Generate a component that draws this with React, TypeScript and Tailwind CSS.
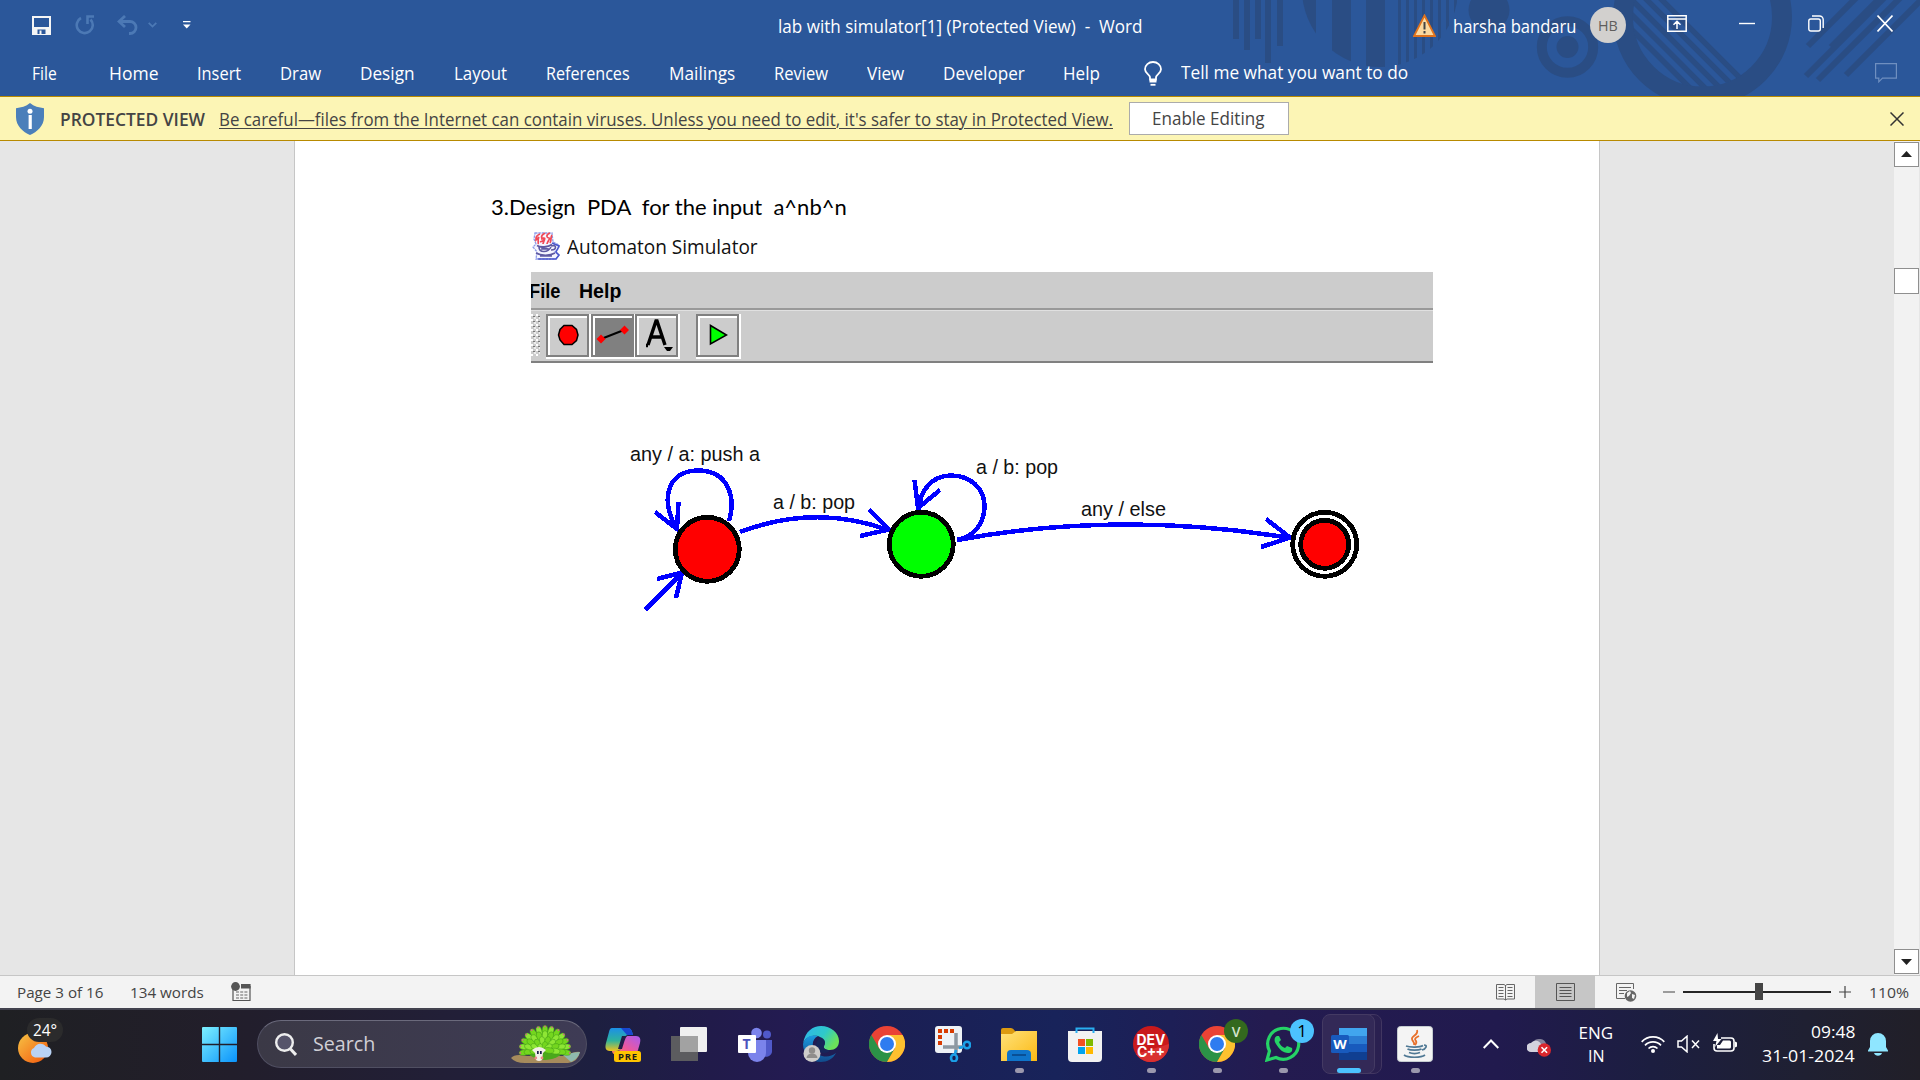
import React, { useLayoutEffect, useRef, useState } from "react";

/* Single-line text condensed or widened to fill the width of its box. */
function Fit({ className = "", inner = "", children }: { className?: string; inner?: string; children: React.ReactNode }) {
  const box = useRef<HTMLSpanElement>(null);
  const txt = useRef<HTMLSpanElement>(null);
  const [scale, setScale] = useState(1);
  useLayoutEffect(() => {
    if (box.current && txt.current && txt.current.offsetWidth) {
      setScale(box.current.offsetWidth / txt.current.offsetWidth);
    }
  }, []);
  return (
    <span ref={box} className={"block shrink-0 whitespace-pre " + className}>
      <span ref={txt} className={"inline-block origin-left " + inner} style={{ transform: `scaleX(${scale})` }}>
        {children}
      </span>
    </span>
  );
}

function Decor() {
  const bars = [[1233, 39], [1244, 50], [1255, 39], [1265, 63], [1277, 46]];
  const thin = [1398, 1406, 1414, 1422, 1430, 1438, 1446, 1454];
  const diag = [1662, 1647, 1632, 1617, 1602];
  return (
    <svg className="absolute top-0 right-0" width="700" height="96" viewBox="1220 0 700 96" fill="#2a4d84">
      <defs>
        <clipPath id="disc"><circle cx="1380" cy="-11" r="78" /></clipPath>
        <clipPath id="ring"><circle cx="1702.5" cy="17" r="70" /></clipPath>
      </defs>
      {bars.map(([x, h]) => <rect key={x} x={x} y="0" width="6" height={h} />)}
      <g clipPath="url(#disc)">
        <rect x="1300" y="0" width="16" height="96" />
        <rect x="1332" y="0" width="19" height="96" />
        <rect x="1366" y="0" width="19" height="96" />
        {thin.map((x) => <rect key={x} x={x} y="0" width="3" height="96" />)}
      </g>
      <circle cx="1489" cy="10" r="20.5" />
      <circle cx="1567.5" cy="47" r="25.7" fill="none" stroke="#2a4d84" strokeWidth="10" />
      <circle cx="1567.5" cy="47" r="11" />
      <circle cx="1702.5" cy="17" r="79.5" fill="none" stroke="#2a4d84" strokeWidth="20" />
      <g clipPath="url(#ring)" stroke="#2a4d84" strokeWidth="5.5">
        {diag.map((c) => <path key={c} d={`M${c - 20} -20L${c + 110} 110`} />)}
      </g>
      <g stroke="#2a4d84" strokeWidth="6">
        <path d="M1808 46L1862 -8M1831 47L1886 -8M1806 76L1890 -8M1818 80L1906 -8M1846 75L1930 -9" />
      </g>
    </svg>
  );
}

function TitleBar() {
  return (
    <div className="relative flex h-[50px] items-center pl-8 pr-[27px] text-[17.5px] leading-6 text-white">
      <svg width="19" height="19" viewBox="0 0 19 19" fill="none">
        <path d="M1 1h17v17H1z" stroke="#f5f5f5" strokeWidth="2" />
        <path d="M1 11h17v7H1z" fill="#f5f5f5" />
        <path d="M5.500 13.500h8v4.500h-8z" fill="#2b579a" /><path d="M7.500 14.500h2v4h-2z" fill="#f5f5f5" />
      </svg>
      <svg className="ml-6" width="20" height="20" viewBox="0 0 20 20" fill="none" stroke="#4c79b5" strokeWidth="2.6">
        <path d="M6 3A8 8 0 1 0 15.500 4.500" /><path d="M19 1.500h-6.500V9" />
      </svg>
      <svg className="ml-[22px]" width="21" height="20" viewBox="0 0 21 20" fill="none" stroke="#4c79b5" strokeWidth="2.800">
        <path d="M8 1L2 6.500L8 12M2 6.500h11a6 6 0 0 1 0 12h-1" />
      </svg>
      <svg className="ml-[10px]" width="9" height="6" viewBox="0 0 9 6" fill="none" stroke="#4c79b5" strokeWidth="1.800"><path d="M.7 .8L4.500 4.600L8.300 .8" /></svg>
      <svg className="ml-[26px]" width="8" height="8" viewBox="0 0 8 8" fill="#fff"><path d="M0 0h7.500v1.300H0zM0 3.500h7.500L3.750 7.500z" /></svg>
      <Fit className="ml-[587px] mt-[1px] w-[365px]">lab with simulator[1] (Protected View)  -  Word</Fit>
      <div className="ml-auto flex items-center">
        <svg width="23" height="23" viewBox="0 0 23 23"><path d="M11.500 1.500L22 22H1z" fill="#fbd9a0" stroke="#e0731d" strokeWidth="1.800" /><path d="M10.500 8h2v7.500h-2zM10.500 17h2v2.500h-2z" fill="#444" /></svg>
        <Fit className="ml-[17px] mt-[1px] w-[123px]">harsha bandaru</Fit>
        <div className="ml-[14px] flex size-9 items-center justify-center rounded-full bg-[#d2d0ce] text-[15px] text-[#605e5c]"><Fit className="w-5">HB</Fit></div>
        <svg className="ml-[41px] -mt-1" width="20" height="17" viewBox="0 0 20 17" fill="none" stroke="#fff" strokeWidth="1.500"><path d="M.8 .8h18.400v15.400H.8zM.8 4h18.400M10 14V6.500M6.500 9.800L10 6.300L13.500 9.800" /></svg>
        <svg className="ml-[52px] -mt-1" width="16" height="17" viewBox="0 0 16 17" stroke="#fff" strokeWidth="1.400"><path d="M0 8.500h16" /></svg>
        <svg className="ml-[53px] -mt-1" width="16" height="17" viewBox="0 0 16 17" fill="none" stroke="#fff" strokeWidth="1.400"><rect x=".8" y="4" width="11.500" height="12" rx="2" /><path d="M4 1h7.500a3.700 3.700 0 0 1 3.700 3.700V13" /></svg>
        <svg className="ml-[53px] -mt-1" width="16" height="17" viewBox="0 0 16 17" stroke="#fff" strokeWidth="1.600"><path d="M.5 .5l15 16M15.500 .5l-15 16" /></svg>
      </div>
    </div>
  );
}

function Tabs() {
  return (
    <div className="relative flex h-[46px] items-center pl-8 text-[17.5px] leading-6 text-white">
      <Fit className="w-[25px]">File</Fit>
      <Fit className="ml-[52px] w-[49px]">Home</Fit>
      <Fit className="ml-[39px] w-[44px]">Insert</Fit>
      <Fit className="ml-[39px] w-[41px]">Draw</Fit>
      <Fit className="ml-[39px] w-[55px]">Design</Fit>
      <Fit className="ml-[39px] w-[53px]">Layout</Fit>
      <Fit className="ml-[39px] w-[84px]">References</Fit>
      <Fit className="ml-[39px] w-[66px]">Mailings</Fit>
      <Fit className="ml-[39px] w-[54px]">Review</Fit>
      <Fit className="ml-[39px] w-[37px]">View</Fit>
      <Fit className="ml-[39px] w-[82px]">Developer</Fit>
      <Fit className="ml-[38px] w-[37px]">Help</Fit>
      <svg className="ml-[44px]" width="18" height="25" viewBox="0 0 18 25" fill="none" stroke="#fff" strokeWidth="1.800">
        <path d="M6 18.500V16.500C6 13.500 1 12.500 1 8.300a8 7.300 0 0 1 16 0C17 12.500 12 13.500 12 16.500v2zM5.500 20.500h7" /><path d="M6.500 23.800h5" />
      </svg>
      <Fit className="ml-[19px] -mt-[2px] w-[227px]">Tell me what you want to do</Fit>
      <svg className="ml-auto mr-[23px]" width="22" height="20" viewBox="0 0 22 20" fill="none" stroke="#6f8fc0" strokeWidth="1.200"><path d="M.6 .6h20.800v14.500H7.500L3.800 18.800V15.100H.6z" /></svg>
    </div>
  );
}

function ProtectedBar() {
  return (
    <div className="flex h-[45px] items-center border-y border-[#b88a00] bg-[#fcf5b5] pl-4 pr-4 text-[17.5px] leading-6 text-[#444]">
      <svg width="28" height="32" viewBox="0 0 28 32"><path d="M14 0C18 3.500 23 4.500 28 5.200V14C28 23 21 29 14 32C7 29 0 23 0 14V5.200C5 4.500 10 3.500 14 0z" fill="#4b7fba" /><circle cx="14" cy="8.300" r="2.500" fill="#fff" /><path d="M12.600 12h3.200v14h-3.200z" fill="#fff" /></svg>
      <Fit className="ml-4 w-[145px] font-semibold">PROTECTED VIEW</Fit>
      <Fit className="ml-[14px] w-[894px]" inner="underline decoration-1 underline-offset-2">Be careful—files from the Internet can contain viruses. Unless you need to edit, it's safer to stay in Protected View.</Fit>
      <div className="ml-4 flex h-[33px] w-40 items-center justify-center border border-[#ababab] bg-white"><Fit className="-ml-[2px] -mt-px w-[112px]">Enable Editing</Fit></div>
      <svg className="ml-auto" width="14" height="14" viewBox="0 0 14 14" stroke="#333" strokeWidth="1.500"><path d="M.5 .5l13 13M13.500 .5l-13 13" /></svg>
    </div>
  );
}

const bevel = "flex size-[43px] items-center justify-center border-2 border-[#808080] shadow-[1px_1px_0_1px_#fff,inset_1px_1px_0_1px_#fff]";

function SimulatorWindow() {
  return (
    <div className="ml-[236px] w-[902px]">
      <div className="flex h-[52px] items-center pl-[1px]">
        <svg width="28" height="28" viewBox="0 0 28 28" fill="none" strokeWidth="1.300">
          <path d="M3 1h17l1 9 6 3v3l-4 4 4 3-3 4H4l1-7-4-5 3-3-2-5z" fill="#f6f6ff" stroke="#8f9ce8" strokeDasharray="2.500 .8" />
          <path d="M8 2c-5 2-4 5-4 6l3-3c-2 3 0 5-1 7M13 1c-5 3-4 6-1 5 2 0-1 4-1 6M18 1c-5 2-3 5-1 5s-2 4-2 6M20 3c-2 3 0 5-2 8M9 7h4M8 10l5-2" stroke="#f04a58" strokeWidth="1.700" />
          <path d="M5 13.500c3 2 11 2 15-1M7 15c0 6 9 6 12 0M19 14c6-2 6 4 0 4M9 15l7 2M9 17l8 0M4 21c5 3 14 3 19 0M8 24h12" stroke="#5f5aa2" strokeWidth="1.600" />
          <path d="M20 11l7 3-3 6 3 3-3 4H6" stroke="#4b57cc" strokeWidth="1.500" />
        </svg>
        <Fit className="ml-[7px] mt-px w-[191px] text-[20px] leading-6 text-[#111]">Automaton Simulator</Fit>
      </div>
      <div className="h-[91px] overflow-hidden border-b-2 border-[#808080] bg-[#ccc] font-['Liberation_Sans',sans-serif]">
        <div className="flex h-[38px] items-center border-b-2 border-[#999] pt-[2px] text-[20px] font-bold leading-6 text-black">
          <Fit className="-ml-[2px] w-[31px]">File</Fit>
          <Fit className="ml-[19px] w-[42px]">Help</Fit>
        </div>
        <div className="flex h-[51px] items-center border-t border-[#e0e0e0] pb-[2px]">
          <svg width="9" height="42" shapeRendering="crispEdges">
            <defs>
              <pattern id="grip" width="5" height="5" patternUnits="userSpaceOnUse"><path d="M0 0h2v2H0z" fill="#fff" /><path d="M2 2h2v1H2z" fill="#777" /><path d="M3 3h2v2H3z" fill="#eee" /></pattern>
            </defs>
            <rect width="9" height="42" fill="url(#grip)" />
          </svg>
          <div className={bevel + " ml-[6px]"}>
            <svg width="22" height="22" viewBox="0 0 22 22"><path d="M7 1.500h8l4.500 4 1.500 5.500-1.500 5.500-4.500 4H7l-4-4.500L1.500 11 3 5.500z" fill="#f00" stroke="#000" strokeWidth="1.500" /></svg>
          </div>
          <div className={bevel + " ml-[2px] bg-[#808080]"}>
            <svg width="34" height="20" viewBox="0 0 34 20"><path d="M5 14L28 5" stroke="#000" strokeWidth="2" /><path d="M5 9.500l4.500 4.500L5 18.500L.5 14zM28.500 .5l4.500 4.500-4.500 4.500L24 5z" fill="#f00" /></svg>
          </div>
          <div className={bevel + " ml-px"}>
            <svg width="32" height="34" viewBox="0 0 32 34"><path d="M5 27.500h2M7 27L15 3h1l8 24M10 19h12" fill="none" stroke="#000" strokeWidth="3.400" /><path d="M23 29h9l-3 4h-3z" /></svg>
          </div>
          <div className={bevel + " ml-[18px]"}>
            <svg width="20" height="22" viewBox="0 0 20 22"><path d="M2.500 1.500L18.500 11L2.500 20z" fill="#0f0" stroke="#000" strokeWidth="1.600" /></svg>
          </div>
        </div>
      </div>
    </div>
  );
}

function Automaton() {
  return (
    <svg className="ml-[325px]" width="760" height="190" viewBox="620 430 760 190" fontFamily="'Liberation Sans', Arial, sans-serif" fontSize="20.5" fill="#111" shapeRendering="crispEdges">
      <g fill="none" stroke="#00f" strokeWidth="4.500">
        <path d="M729 521C736 498 729 470.500 698 470.500C666 470.500 660 502 677 529M655 512L677 529L678.500 502" />
        <path d="M645 610L682 573M657 579L682 572.500L676 598" />
        <path d="M740 532Q815 503.500 888 530M869 509.500L889 529.500L860 536" />
        <path d="M957 539.500C975 538 984.500 521 984.500 506C984.500 488 970 475.500 951 475.500C932 475.500 920 490 918.500 510M914.500 480L918 508L940 490" />
        <path d="M957 540Q1120 510 1290 538M1266 519L1290 537.500L1261 547" />
      </g>
      <g stroke="#000" strokeWidth="4.800">
        <circle cx="707.300" cy="549.300" r="32" fill="#f00" />
        <circle cx="921.300" cy="544.300" r="32" fill="#0f0" />
        <circle cx="1324.700" cy="544.300" r="32" fill="#fff" />
        <circle cx="1324.700" cy="544.300" r="24" fill="#f00" />
      </g>
      <text x="630" y="461" textLength="130" lengthAdjust="spacingAndGlyphs">any / a: push a</text>
      <text x="773" y="509" textLength="82" lengthAdjust="spacingAndGlyphs">a / b: pop</text>
      <text x="976" y="474" textLength="82" lengthAdjust="spacingAndGlyphs">a / b: pop</text>
      <text x="1081" y="515.500" textLength="85" lengthAdjust="spacingAndGlyphs">any / else</text>
    </svg>
  );
}

function Workspace() {
  return (
    <div className="flex h-[835px] border-b border-[#c6c6c6] bg-[#e6e6e6]">
      <div className="ml-[294px] w-[1306px] border-x border-[#c6c6c6] bg-white">
        <Fit className="ml-[196px] mt-[53px] w-[356px] font-['Lato',sans-serif] text-[21px] leading-[26px] text-black">3.Design  PDA  for the input  a^nb^n</Fit>
        <SimulatorWindow />
        <div className="h-[67px]" />
        <Automaton />
      </div>
      <div className="ml-auto mr-px flex w-[25px] flex-col bg-[#f2f2f2] py-px">
        <div className="flex h-[25px] items-center justify-center border border-[#8f8f8f] bg-white"><svg className="-mt-px" width="11" height="6" viewBox="0 0 11 6" fill="#222"><path d="M5.500 0L11 6H0z" /></svg></div>
        <div className="mt-[101px] h-[26px] border border-[#8f8f8f] bg-white" />
        <div className="mt-auto flex h-[25px] items-center justify-center border border-[#8f8f8f] bg-white"><svg width="11" height="6" viewBox="0 0 11 6" fill="#222"><path d="M5.500 6L0 0h11z" /></svg></div>
      </div>
    </div>
  );
}

function StatusBar() {
  return (
    <div className="flex h-8 items-center bg-[#f3f3f3] pl-[17px] text-[15px] leading-6 text-[#444]">
      <Fit className="w-[86px]">Page 3 of 16</Fit>
      <Fit className="ml-[27px] w-[74px]">134 words</Fit>
      <svg className="ml-[27px]" width="20" height="20" viewBox="0 0 20 20"><path d="M2 5.500V18.500H19V4" fill="none" stroke="#555" strokeWidth="1.200" /><path d="M10 2h9.600v4.500H10z" fill="#555" /><circle cx="4.500" cy="4.500" r="4.400" fill="#555" /><path d="M5 10h12M5 13h12M5 16h12" stroke="#666" strokeWidth="1.200" strokeDasharray="3 1.200" /></svg>
      <svg className="ml-auto" width="20" height="18" viewBox="0 0 20 18" fill="none" stroke="#666" strokeWidth="1"><path d="M.5 1.500h7.500l1.500 1 1.500-1H18.500v14.500H11l-1.500 1-1.500-1H.5zM9.500 2v15M2.500 4.500H7.500M2.500 7.500H7.500M2.500 10.500H7.500M2.500 13.500H7.500M11.500 4.500H16.500M11.500 7.500H16.500M11.500 10.500H16.500M11.500 13.500H16.500" /></svg>
      <div className="ml-[19px] flex h-8 w-[60px] items-center justify-center bg-[#c6c6c6]">
        <svg width="19" height="18" viewBox="0 0 19 18" fill="none" stroke="#555"><path d="M.5 .5h18v17H.5zM3.500 4.500h12M3.500 7.500h12M3.500 10.500h12M3.500 13.500h12" /></svg>
      </div>
      <svg className="ml-[21px]" width="21" height="19" viewBox="0 0 21 19"><path d="M17.500 6V.5H.5V15.500H9M3 4.500h12M3 7.500h8M3 10.500h5" fill="none" stroke="#666" /><circle cx="14.500" cy="13" r="5.800" fill="#666" /><path d="M11 10l3-2 1 2-2 3-2 1zM16 11l3 1-1 4-2-1z" fill="#f3f3f3" /></svg>
      <svg className="ml-[26px]" width="188" height="18" viewBox="1663 983 188 18"><path d="M1663 992h12M1839 992h12M1845 986v12" stroke="#444" strokeWidth="1.200" /><path d="M1683 992h148" stroke="#262626" strokeWidth="1.800" /><path d="M1755 983h8v17h-8z" fill="#444" /></svg>
      <Fit className="ml-[18px] mr-[11px] w-10">110%</Fit>
    </div>
  );
}

function Chrome() {
  return (
    <svg width="36" height="36" viewBox="0 0 36 36">
      <circle cx="18" cy="18" r="18" fill="#ea4335" />
      <path d="M2.400 9A18 18 0 0 0 18 36L25.800 22.500 18 27 10.200 22.500z" fill="#2b9247" />
      <path d="M18 36A18 18 0 0 0 33.600 9H18l7.800 13.500z" fill="#fdc12f" />
      <circle cx="18" cy="18" r="9" fill="#fff" /><circle cx="18" cy="18" r="7" fill="#2f7cf0" />
    </svg>
  );
}

function Cell({ children, run = false }: { children: React.ReactNode; run?: boolean }) {
  return (
    <div className="relative flex h-[72px] w-[66px] items-center justify-center">
      {children}
      {run && <span className="absolute bottom-[7px] h-[5px] w-[9px] rounded-full bg-[#9b98ad]" />}
    </div>
  );
}

function AppStrip() {
  return (
    <div className="ml-[3px] flex">
      <Cell>
        <svg width="36" height="36" viewBox="0 0 36 36">
          <defs>
            <linearGradient id="cpa" x1="0" y1="0" x2="0" y2="1"><stop stopColor="#1c8fe8" /><stop offset=".55" stopColor="#2fb39c" /><stop offset="1" stopColor="#f1c21c" /></linearGradient>
            <linearGradient id="cpb" x1="1" y1="0" x2="0" y2="1"><stop stopColor="#a85bf0" /><stop offset=".6" stopColor="#f0589a" /><stop offset="1" stopColor="#ff8c4a" /></linearGradient>
          </defs>
          <path d="M7 2h16c3 0 4 3 5 7h-5c-3 0-4 3-5 7l-2 5c-1 3-2 4-5 4H5c-5 0-5-4-4-8L4 6c.6-2.600 1.400-4 3-4z" fill="url(#cpa)" />
          <path d="M16 2h7c3 0 4 3 5 7h-6z" fill="#1747cf" />
          <path d="M23 10h8c4 0 5 3 4 7l-2 7c-1 3-2 4-5 4H9c-1 0-2-2-2-3h5c3 0 4-2 5-6l1.500-5c1-3 2-4 4.500-4z" fill="url(#cpb)" />
          <path d="M17 10h5c-2 2-3 7-5 13h-4z" fill="#221d47" />
          <rect x="9" y="25" width="27" height="11" rx="2.500" fill="#ffc400" />
          <text x="13" y="34" fontSize="9.500" fontWeight="700" fontFamily="Open Sans" textLength="19" fill="#1b1b1b">PRE</text>
        </svg>
      </Cell>
      <Cell>
        <svg width="36" height="36" viewBox="0 0 36 36"><rect x="9" y="1" width="27" height="25" rx="1" fill="#f0f0f0" /><path d="M0 10h27v25H0z" fill="#5c5c5f" /><path d="M9 10h18v16H9z" fill="#a2a2a2" /></svg>
      </Cell>
      <Cell>
        <svg width="36" height="36" viewBox="0 0 36 36"><circle cx="30" cy="8.500" r="4" fill="#5059c9" /><path d="M24 14h11v10a6 6 0 0 1-11 4z" fill="#5059c9" /><circle cx="19.500" cy="7" r="5.300" fill="#7b83eb" /><path d="M11 14h18v13a8.500 8.500 0 0 1-18 0z" fill="#7b83eb" /><rect x="1" y="9" width="18" height="18" rx="1" fill="#fff" /><text x="5.500" y="23" fontSize="14" fontWeight="700" fontFamily="Open Sans" fill="#4b53bc">T</text></svg>
      </Cell>
      <Cell>
        <svg width="36" height="36" viewBox="0 0 36 36">
          <defs>
            <linearGradient id="eda" x1="0" y1="0" x2="1" y2=".5"><stop stopColor="#2fb5ee" /><stop offset=".6" stopColor="#2fc9c9" /><stop offset="1" stopColor="#6be25a" /></linearGradient>
            <linearGradient id="edb" x1="0" y1="0" x2="0" y2="1"><stop stopColor="#1b9be0" /><stop offset="1" stopColor="#114a8b" /></linearGradient>
          </defs>
          <path d="M0 18C2 5 10 0 18 0c10 0 18 7 18 15 0 6-4 9-9 9-5 0-7-2-6-4 2-3 0-8-6-10-6-1-13 1-15 8z" fill="url(#eda)" />
          <path d="M0 18C2 11 8 8 15 10c-7 3-7 13 0 18 6 4 13 3 18-1C30 33 24 36 18 36 8 36 0 28 0 18z" fill="url(#edb)" />
          <path d="M13 20c0-5 4-9 6-8 3 2 4 4 2 8-1 2 1 4 6 4-2 4-12 5-14-4z" fill="#17265a" />
          <circle cx="9" cy="27.500" r="8.500" fill="#cfcdca" /><circle cx="9" cy="24.500" r="3.200" fill="#8f8d8b" /><path d="M3.500 32a5.500 4.500 0 0 1 11 0z" fill="#8f8d8b" />
        </svg>
      </Cell>
      <Cell><Chrome /></Cell>
      <Cell>
        <svg width="36" height="36" viewBox="0 0 36 36"><rect width="27" height="27" rx="3" fill="#eef2f6" /><path d="M3 3h4v4H3zM9 3h4v4H9zM15 3h4v4h-4zM3 9h4v4H3zM3 15h4v4H3z" fill="#d83b01" /><path d="M21 7v20M8 21h20" stroke="#8d98a2" strokeWidth="3.500" /><g fill="none" stroke="#1ba0e8" strokeWidth="2.600"><circle cx="32" cy="19" r="3.200" /><ellipse cx="19" cy="32" rx="3" ry="3.500" /><path d="M28 21l-4 1M20 28l1-4" /></g></svg>
      </Cell>
      <Cell run>
        <svg width="36" height="36" viewBox="0 0 36 36"><defs><linearGradient id="fld" x1="0" y1="0" x2="1" y2="1"><stop stopColor="#ffe27a" /><stop offset="1" stopColor="#fbb914" /></linearGradient></defs><path d="M0 9V4q0-2 2-2h8q2 0 4 3l3 3z" fill="#dc9a10" /><path d="M0 8h11l4-3h21v30H0z" fill="url(#fld)" /><path d="M6 35v-7q0-4 4-4h16q4 0 4 4v7z" fill="#0f74ca" /><path d="M11 29h14" stroke="#0a4b8f" strokeWidth="1.800" /></svg>
      </Cell>
      <Cell>
        <svg width="36" height="36" viewBox="0 0 36 36"><path d="M1 5h34v27q0 4-4 4H5q-4 0-4-4z" fill="#f2f2f2" /><path d="M9.500 7V2.500h17V7" fill="none" stroke="#29aef0" strokeWidth="2" /><path d="M11 13h7v7h-7z" fill="#f25022" /><path d="M19 13h7v7h-7z" fill="#7fba00" /><path d="M11 21h7v7h-7z" fill="#00a4ef" /><path d="M19 21h7v7h-7z" fill="#ffb900" /></svg>
      </Cell>
      <Cell run>
        <svg width="36" height="36" viewBox="0 0 36 36" fontFamily="Inter" fontWeight="700" fontSize="14" fill="#fff"><circle cx="18" cy="18" r="18" fill="#c9191b" /><path d="M36 18a18 18 0 0 1-33 10z" fill="#d93030" /><text x="3.500" y="18.500" textLength="29">DEV</text><text x="4" y="30.500" textLength="28">C++</text></svg>
      </Cell>
      <Cell run>
        <Chrome />
        <span className="absolute top-[11px] right-[2px] flex size-6 items-center justify-center rounded-full bg-[#33691e] text-[14px] font-semibold text-[#d5e3cd]">V</span>
      </Cell>
      <Cell run>
        <svg width="36" height="36" viewBox="0 0 36 36"><path d="M2 34l2.500-9A15.500 15.500 0 1 1 11 31.500z" fill="none" stroke="#25d366" strokeWidth="3.200" /><path d="M12 10c-3 1-3 5-1 8 3 5 7 9 12 9 3 0 5-2 4-5l-5-2-2 2c-3-1-5-3-6-6l2-2-2-4z" fill="#25d366" /></svg>
        <span className="absolute top-[11px] right-[2px] flex size-6 items-center justify-center rounded-full bg-[#4cc2ff] text-[17px] text-black">1</span>
      </Cell>
      <div className="relative flex h-[72px] w-[66px] items-center justify-center">
        <div className="absolute top-[6px] right-0 h-[60px] w-[53px] rounded-lg border border-[#413661] bg-[#2a2050]" />
        <div className="absolute top-[6px] left-[6px] h-[60px] w-[53px] rounded-lg border border-[#443a63] bg-[#332957]" />
        <svg className="relative" width="36" height="36" viewBox="0 0 36 36"><path d="M8 2h28v8H8z" fill="#41a5ee" /><path d="M8 10h28v8H8z" fill="#2b7cd3" /><path d="M8 18h28v8H8z" fill="#185abd" /><path d="M8 26h28v8H8z" fill="#103f91" /><rect x="0" y="9" width="18" height="18" rx="1.500" fill="#185abd" /><text x="2.300" y="22.700" fontSize="13" fontWeight="700" fontFamily="Open Sans" textLength="13.500" lengthAdjust="spacingAndGlyphs" fill="#fff">W</text></svg>
        <span className="absolute bottom-[7px] h-[5px] w-6 rounded-full bg-[#4cc2ff]" />
      </div>
      <Cell run>
        <svg width="36" height="36" viewBox="0 0 36 36" fill="none"><rect x=".5" y=".5" width="35" height="35" rx="3" fill="#f4f4f4" stroke="#c5ccd0" /><path d="M20 4c2 5-6 6-5 9 0 2 3 3 2 6M22 10c-4 2-5 3-3 5 1 2 0 3-1 4" stroke="#e8702a" strokeWidth="1.800" /><path d="M9 20c4 1.500 14 1.500 17-.5M10.500 23c3 1.500 11 1.500 14 0M12 26.500c3 1.200 8 1.200 11 0M27 19c4 0 2 4-2 5M7 29c4 3 17 3 21 0" stroke="#4f7894" strokeWidth="1.700" /></svg>
      </Cell>
    </div>
  );
}

function Hedgehog() {
  const rows = [
    { n: 13, rx: 23, ry: 24 }, { n: 11, rx: 18, ry: 18 }, { n: 8, rx: 12, ry: 12 }, { n: 5, rx: 6, ry: 6 },
  ];
  return (
    <svg className="ml-auto mr-[5px]" width="70" height="40" viewBox="0 0 70 40">
      <path d="M0 34q4-5 16-2l38 0q10-5 15-4-2 10-12 11H14Q4 39 0 34z" fill="#a78b5c" /><path d="M52 31q12-3 17-3-2 7-9 10z" fill="#8fb9ae" />
      <ellipse cx="34" cy="21" rx="21" ry="15" fill="#4aa81c" />
      {rows.map((r, k) =>
        Array.from({ length: r.n }, (_, i) => {
          const a = Math.PI * (1.04 - (1.08 * i) / (r.n - 1));
          const x = 34 + r.rx * Math.cos(a);
          const y = 26 - r.ry * Math.sin(a) * 0.9;
          return (
            <g key={`${k}-${i}`} transform={`rotate(${90 - (a * 180) / Math.PI} ${x} ${y})`}>
              <ellipse cx={x} cy={y + 2} rx="2.800" ry="5" fill={i % 2 ? "#8ee634" : "#74d61e"} stroke="#3f9c16" strokeWidth=".5" />
              {k === 0 && <circle cx={x} cy={y - 2} r=".9" fill="#d8608c" />}
            </g>
          );
        })
      )}
      <path d="M21 26q7-6 14 0l-3 3-1 7q-3 2-6 0l-1-7z" fill="#f2eee8" /><path d="M26 27h1.700v3H26zM29 27h1.700v3H29z" fill="#171b4c" /><circle cx="24.800" cy="34" r="1.400" fill="#e88" /><circle cx="31" cy="34" r="1.400" fill="#e88" />
    </svg>
  );
}

function Taskbar() {
  return (
    <div className="flex h-[72px] items-center bg-[linear-gradient(90deg,#1f2023_0%,#221e2b_12%,#221f38_24%,#1d1f40_31%,#211b4a_37%,#231b51_41%,#1b1f54_46%,#18235a_55%,#1d1f56_61%,#241b50_66%,#211a4e_78%,#1c1e40_86%,#1f2032_94%,#211f28_100%)] pl-[18px] text-white shadow-[inset_0_2px_0_#43434f]">
      <div className="relative h-[42px] w-[45px]">
        <svg width="45" height="42" viewBox="0 0 45 42"><defs><linearGradient id="sun" x1="0" y1="0" x2="1" y2="1"><stop stopColor="#f6c445" /><stop offset="1" stopColor="#f3560c" /></linearGradient></defs><circle cx="15" cy="25" r="15" fill="url(#sun)" /><path d="M17 34.500a5 5 0 0 1-1-9.500 7 7 0 0 1 12-1.500 5.500 5.500 0 0 1 0 11z" fill="#b9d2f5" /></svg>
        <div className="absolute -top-[5px] left-[9px] flex h-6 w-9 items-center justify-center rounded-xl bg-[#2b2b2c] text-[16px] leading-6"><Fit className="w-6">24°</Fit></div>
      </div>
      <svg className="ml-[139px]" width="35" height="35" viewBox="0 0 35 35"><defs><linearGradient id="win" x1="0" y1="0" x2="1" y2="1"><stop stopColor="#7df0ff" /><stop offset="1" stopColor="#0a93fb" /></linearGradient></defs><path d="M1 0h15.800v16.800H0V1q0-1 1-1zM18.200 0H34q1 0 1 1v15.800H18.200zM0 18.200h16.800V35H1q-1 0-1-1zM18.200 18.200H35V34q0 1-1 1H18.200z" fill="url(#win)" /></svg>
      <div className="ml-5 flex h-12 w-[330px] items-center rounded-full border border-[#504f62] border-t-[#6b6a7c] bg-[linear-gradient(90deg,#3b3946,#3e3b55)] pl-[17px]">
        <svg width="22" height="23" viewBox="0 0 22 23" fill="none" stroke="#eee" strokeWidth="2.400"><circle cx="9.500" cy="9.500" r="8.300" fill="#56546a" /><path d="M15.500 16L21 22" strokeWidth="3" /></svg>
        <Fit className="ml-4 w-[62px] text-[20px] leading-6 text-[#d0cfd6]">Search</Fit>
        <Hedgehog />
      </div>
      <AppStrip />
      <svg className="ml-[35px]" width="16" height="10" viewBox="0 0 16 10" fill="none" stroke="#fff" strokeWidth="2"><path d="M.7 9L8 1.500L15.300 9" /></svg>
      <svg className="ml-7 mt-1" width="24" height="21" viewBox="0 0 24 21"><path d="M6 6a7 6 0 0 1 13 2l1 8H10z" fill="#85839b" /><path d="M4 16a4.500 4.500 0 0 1 0-9 6 6 0 0 1 10 1l3 8z" fill="#d3d2de" /><circle cx="17.300" cy="14" r="6.700" fill="#d9262c" /><path d="M14.500 11.200l5.600 5.600M20.100 11.200l-5.600 5.600" stroke="#fff" strokeWidth="1.600" /></svg>
      <div className="ml-7 flex w-[34px] flex-col items-center text-[17px] leading-[23px]"><Fit className="w-[35px]">ENG</Fit><Fit className="w-[17px]">IN</Fit></div>
      <svg className="ml-7" width="24" height="19" viewBox="0 0 24 19" fill="none" stroke="#fff" strokeWidth="1.700"><path d="M.7 6.800a15.500 15.500 0 0 1 22.600 0M4 10.300a11 11 0 0 1 16 0M7.500 13.500a6.500 6.500 0 0 1 9 0" /><circle cx="12" cy="16" r="2" fill="#fff" stroke="none" /></svg>
      <svg className="ml-3" width="23" height="18" viewBox="0 0 23 18" fill="none" stroke="#fff" strokeWidth="1.500"><path d="M1 6h3.500L10 1.200V16.800L4.500 12H1zM15 5.500l7 7.500M22 5.500L15 13" /></svg>
      <svg className="ml-[13px] -mt-[3px]" width="24" height="20" viewBox="0 0 24 20"><path d="M8 5h10q3 0 3 3v7q0 3-3 3H4q-3 0-3-3v-4" fill="none" stroke="#fff" strokeWidth="1.600" /><path d="M22 8.500l2 1v4l-2 1zM10 7.500h6.500q1.500 0 1.500 1.500v5q0 1.500-1.500 1.500H4V12h3z" fill="#fff" /><path d="M4.500 0L0 8h3.500L2 14l6.500-8H5z" fill="#fff" /></svg>
      <div className="-mt-px ml-[26px] flex w-[92px] flex-col items-end text-[17px] leading-[23.5px]"><Fit className="w-11">09:48</Fit><Fit className="w-[93px]">31-01-2024</Fit></div>
      <svg className="ml-[13px]" width="20" height="23" viewBox="0 0 20 23" fill="#8fe6ff"><path d="M10 0a8 8 0 0 1 8 8v6l2 3.500v1H0v-1L2 14V8a8 8 0 0 1 8-8zM6 20h8q-1 2.800-4 2.800T6 20z" /></svg>
    </div>
  );
}

export default function App() {
  return (
    <div className="h-[1080px] w-[1920px] overflow-hidden font-['Open_Sans','Noto_Sans',sans-serif]">
      <div className="relative h-24 bg-[#2b579a]">
        <Decor />
        <TitleBar />
        <Tabs />
      </div>
      <ProtectedBar />
      <Workspace />
      <StatusBar />
      <Taskbar />
    </div>
  );
}
